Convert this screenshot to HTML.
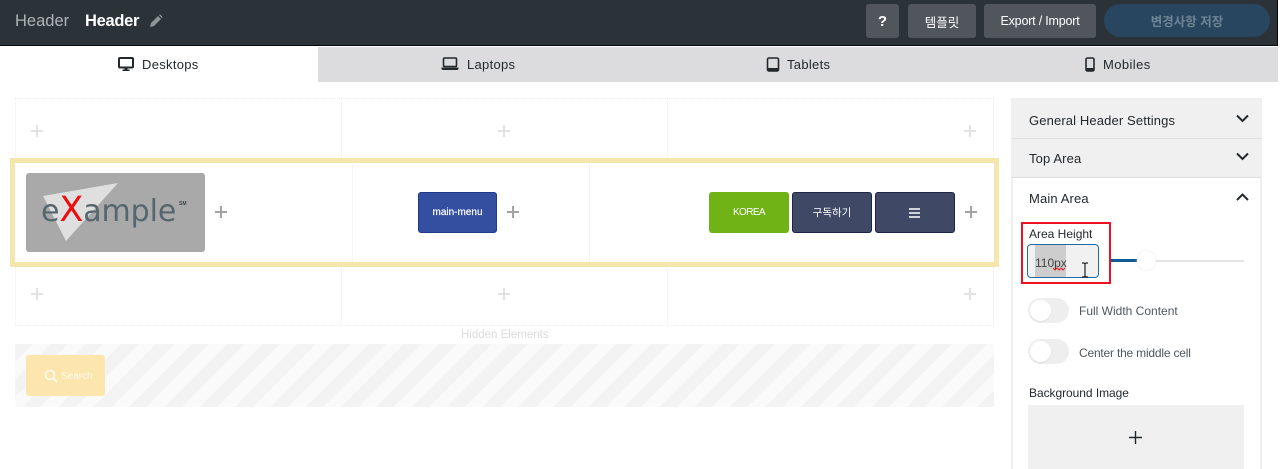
<!DOCTYPE html>
<html lang="ko"><head><meta charset="utf-8"><title>Header</title>
<style>
*{box-sizing:border-box}
html,body{margin:0;padding:0;width:1280px;height:469px;overflow:hidden;background:#fff}
#w{position:relative;width:1280px;height:469px;overflow:hidden;background:#fff;font-family:"Liberation Sans","Noto Sans CJK KR",sans-serif;color:#23282d}
.a{position:absolute}
.t{position:absolute;white-space:nowrap;line-height:1}
.btn{position:absolute;display:flex;align-items:center;justify-content:center;border-radius:3px;color:#fff;white-space:nowrap}
.plus{position:absolute;width:12px;height:12px}
.plus.d{background:linear-gradient(#a3a3a3,#a3a3a3) center/12px 2px no-repeat,linear-gradient(#a3a3a3,#a3a3a3) center/2px 12px no-repeat}
.plus.l{background:linear-gradient(#e2e2e2,#e2e2e2) center/12px 2px no-repeat,linear-gradient(#e2e2e2,#e2e2e2) center/2px 12px no-repeat}
.v{position:absolute;width:0;border-left:1px dotted #ececec}
.tab{font-size:13px;letter-spacing:.3px;color:#23282d}
.tog{position:absolute;width:41px;height:25px;border-radius:13px;background:#eee}
.tog:after{content:"";position:absolute;left:2px;top:2px;width:21px;height:21px;border-radius:50%;background:#fff;box-shadow:0 1px 1px #ddd}
</style></head><body><div id="w">
<div class="a" style="left:0;top:0;width:1278px;height:46px;background:#2c3338;border-bottom:1px solid #0a0a0a;border-right:1px solid #0a0a0a"></div>
<div class="t" style="left:15px;top:13px;font-size:16.500px;color:#b0b4b7">Header</div>
<div class="t" style="left:85px;top:13px;font-size:16.500px;font-weight:bold;color:#fff;letter-spacing:-.3px">Header</div>
<svg class="a" style="left:149px;top:14px" width="14" height="14" viewBox="0 0 14 14"><path d="M1 13l1-4 7-7 3 3-7 7z" fill="#8f9497"/><path d="M10 1l1-.5 2.500 2.500-.5 1z" fill="#a8acae"/></svg>
<div class="btn" style="left:866px;top:4px;width:33px;height:34px;background:#50565c;font-size:15px;font-weight:bold">?</div>
<div class="btn" style="left:908px;top:4px;width:68px;height:34px;background:#50565c;font-size:12.500px">템플릿</div>
<div class="btn" style="left:984px;top:4px;width:112px;height:34px;background:#50565c;font-size:12.500px;letter-spacing:-.2px">Export / Import</div>
<div class="btn" style="left:1104px;top:4px;width:166px;height:33px;border-radius:17px;background:#28465f;color:#6f8495;font-size:12.500px;font-weight:bold">변경사항 저장</div>

<div class="a" style="left:318px;top:47px;width:960px;height:35px;background:#dcdcde"></div>
<svg class="a" style="left:118px;top:57px" width="16" height="15" viewBox="0 0 16 15"><rect x="1" y="1" width="14" height="9.500" rx="1" fill="none" stroke="#23282d" stroke-width="2"/><path d="M6.500 11h3v1.500H11.500V14h-7v-1.500h2z" fill="#23282d"/></svg>
<div class="t tab" style="left:142px;top:58px">Desktops</div>
<svg class="a" style="left:441px;top:57px" width="18" height="14" viewBox="0 0 18 14"><rect x="2.500" y="1" width="13" height="8.500" rx="1" fill="none" stroke="#23282d" stroke-width="1.600"/><path d="M0.500 10.500h17v1.500l-1 1h-15l-1-1z" fill="#23282d"/></svg>
<div class="t tab" style="left:467px;top:58px">Laptops</div>
<svg class="a" style="left:766px;top:57px" width="14" height="15" viewBox="0 0 14 15"><rect x="1.500" y="1" width="11" height="13" rx="1.500" fill="none" stroke="#23282d" stroke-width="1.600"/><rect x="1.500" y="11" width="11" height="3" fill="#23282d"/></svg>
<div class="t tab" style="left:787px;top:58px">Tablets</div>
<svg class="a" style="left:1084px;top:57px" width="12" height="15" viewBox="0 0 12 15"><rect x="2" y="1" width="8" height="13" rx="1.500" fill="none" stroke="#23282d" stroke-width="1.600"/><rect x="2" y="11" width="8" height="3" fill="#23282d"/></svg>
<div class="t tab" style="left:1103px;top:58px;letter-spacing:.4px">Mobiles</div>

<div class="a" style="left:15px;top:98px;width:979px;height:228px;border:1px dotted #ececec"></div>
<div class="v" style="left:341px;top:98px;height:60px"></div>
<div class="v" style="left:667px;top:98px;height:60px"></div>
<div class="v" style="left:341px;top:266px;height:60px"></div>
<div class="v" style="left:667px;top:266px;height:60px"></div>
<div class="plus l" style="left:31px;top:125px"></div>
<div class="plus l" style="left:498px;top:125px"></div>
<div class="plus l" style="left:964px;top:125px"></div>
<div class="plus l" style="left:31px;top:288px"></div>
<div class="plus l" style="left:498px;top:288px"></div>
<div class="plus l" style="left:964px;top:288px"></div>

<div class="a" style="left:10px;top:158px;width:989px;height:109px;border:5px solid #f5e6ab;background:#fff"></div>
<div class="v" style="left:352px;top:163px;height:99px"></div>
<div class="v" style="left:589px;top:163px;height:99px"></div>
<div class="a" style="left:26px;top:173px;width:179px;height:79px;background:#a9a9a9;border-radius:3px;overflow:hidden">
<svg class="a" style="left:0;top:0" width="179" height="79"><polygon points="17,23 92,10 40,68" fill="#dfdfdf"/></svg>
<div class="t" style="left:15px;top:23px;font-family:'DejaVu Sans',sans-serif;font-size:30px;color:#55666e;letter-spacing:-.1px">e<span style="color:#ee0d0d;font-size:35px;line-height:.8">X</span>ample</div>
<div class="t" style="left:153px;top:29px;font-size:5px;font-weight:bold;color:#3c464c">SM</div>
</div>
<div class="plus d" style="left:215px;top:206px"></div>
<div class="btn" style="left:418px;top:192px;width:79px;height:41px;background:#344ea0;border:1px solid #1f3a8a;font-size:10px;-webkit-text-stroke:.2px #fff">main-menu</div>
<div class="plus d" style="left:507px;top:206px"></div>
<div class="btn" style="left:709px;top:192px;width:80px;height:41px;background:#6fb317;font-size:10px;letter-spacing:-.6px">KOREA</div>
<div class="btn" style="left:792px;top:192px;width:80px;height:41px;background:#3f4865;border:1px solid #1c2546;font-size:10.500px">구독하기</div>
<div class="btn" style="left:875px;top:192px;width:80px;height:41px;background:#3f4865;border:1px solid #1c2546"><svg width="12" height="10"><path d="M0 1h11M0 5h11M0 9h11" stroke="#fff" stroke-width="1.600"/></svg></div>
<div class="plus d" style="left:965px;top:206px"></div>

<div class="t" style="left:461px;top:330px;font-size:11.500px;color:#dcdcdc">Hidden Elements</div>
<div class="a" style="left:15px;top:344px;width:979px;height:63px;background:repeating-linear-gradient(135deg,#f3f3f3 0 12.500px,#fafafa 12.500px 25px)"></div>
<div class="a" style="left:26px;top:355px;width:79px;height:41px;background:#fde6ae;border-radius:3px"></div>
<svg class="a" style="left:44px;top:369px" width="14" height="14" viewBox="0 0 14 14"><circle cx="6" cy="6" r="4.500" fill="none" stroke="#fffaf0" stroke-width="1.500"/><path d="M9.500 9.500L13 13" stroke="#fffaf0" stroke-width="1.800"/></svg>
<div class="t" style="left:61px;top:372px;font-size:10px;color:#fffaf0">Search</div>

<div class="a" style="left:1011px;top:98px;width:251px;height:380px;border:2px solid #efefef;border-top-width:1px;background:#fff"></div>
<div class="a" style="left:1012px;top:99px;width:249px;height:40px;background:#f0f0f0;border-bottom:1px solid #dedede"></div>
<div class="a" style="left:1012px;top:139px;width:249px;height:39px;background:#f0f0f0;border-bottom:1px solid #dedede"></div>
<div class="t tab" style="left:1029px;top:114px;letter-spacing:.13px">General Header Settings</div>
<div class="t tab" style="left:1029px;top:152px;letter-spacing:.13px">Top Area</div>
<div class="t tab" style="left:1029px;top:192px;letter-spacing:.13px">Main Area</div>
<svg class="a" style="left:1236px;top:114px" width="13" height="9"><path d="M1 1.500l5.500 5.500 5.500-5.500" fill="none" stroke="#23282d" stroke-width="2"/></svg>
<svg class="a" style="left:1236px;top:152px" width="13" height="9"><path d="M1 1.500l5.500 5.500 5.500-5.500" fill="none" stroke="#23282d" stroke-width="2"/></svg>
<svg class="a" style="left:1236px;top:193px" width="13" height="9"><path d="M1 7l5.500-5.500 5.500 5.500" fill="none" stroke="#23282d" stroke-width="2"/></svg>

<div class="a" style="left:1021px;top:222px;width:90px;height:62px;border:2px solid #ee1122"></div>
<div class="t" style="left:1029px;top:228px;font-size:12px">Area Height</div>
<div class="a" style="left:1027px;top:244px;width:72px;height:34px;border:1px solid #1f6aa5;border-radius:4px;background:#f1f1f1;overflow:hidden"><div class="a" style="left:7px;top:0;width:31px;height:34px;background:#cdcdcd"></div></div>
<div class="t" style="left:1035px;top:257px;font-size:12px;color:#444">110px</div>
<svg class="a" style="left:1053px;top:266px" width="13" height="5"><path d="M0 2l2 2 2-2 2 2 2-2 2 2 2-2" fill="none" stroke="#e01b1b" stroke-width="1"/></svg>
<svg class="a" style="left:1081px;top:262px" width="8" height="16"><path d="M1 1h2l1 1 1-1h2M4 2v12M1 15h2l1-1 1 1h2" fill="none" stroke="#222" stroke-width="1.200"/></svg>
<div class="a" style="left:1111px;top:260px;width:133px;height:2px;background:#e4e4e4"></div>
<div class="a" style="left:1111px;top:259px;width:28px;height:3px;background:#0f5a96"></div>
<div class="a" style="left:1137px;top:251px;width:19px;height:19px;border-radius:50%;background:#fff;box-shadow:0 0 2px #e0e0e0"></div>

<div class="tog" style="left:1028px;top:298px"></div>
<div class="t" style="left:1079px;top:305px;font-size:12px;color:#50575e">Full Width Content</div>
<div class="tog" style="left:1028px;top:339px"></div>
<div class="t" style="left:1079px;top:347px;font-size:12px;letter-spacing:-.2px;color:#50575e">Center the middle cell</div>
<div class="t" style="left:1029px;top:387px;font-size:12px;letter-spacing:-.05px">Background Image</div>
<div class="a" style="left:1028px;top:405px;width:216px;height:70px;background:#f0f0f0"></div>
<svg class="a" style="left:1129px;top:431px" width="13" height="13"><path d="M0 6.500h13M6.500 0v13" stroke="#23282d" stroke-width="1.400"/></svg>
</div></body></html>
